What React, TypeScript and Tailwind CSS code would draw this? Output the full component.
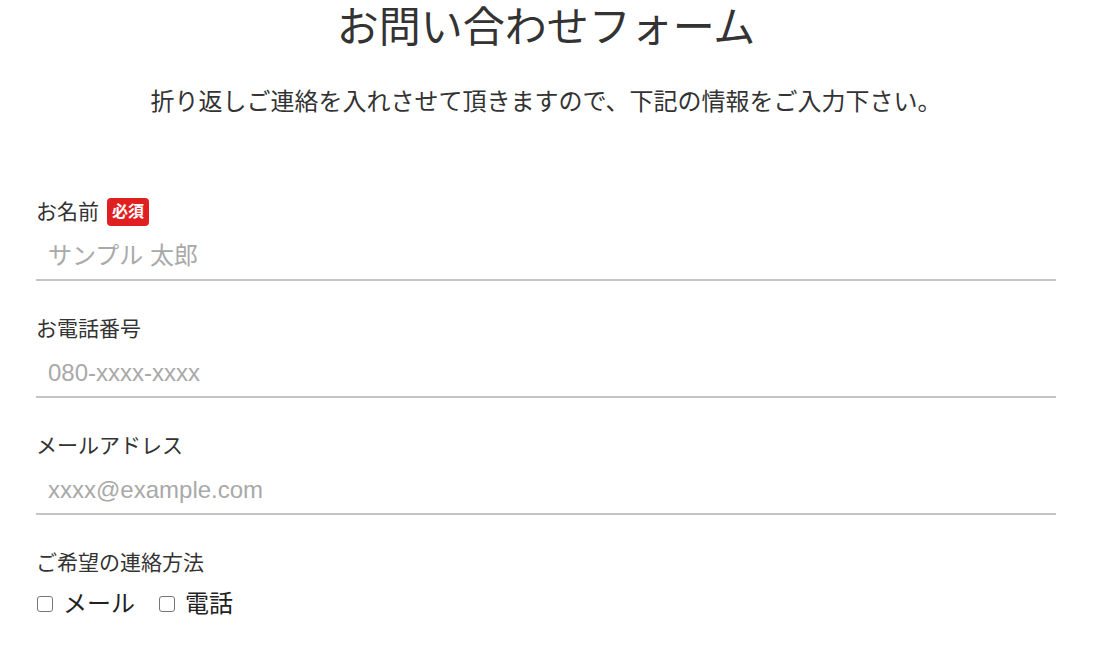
const font = "font-['Liberation_Sans','Noto_Sans_CJK_JP',sans-serif]";

function Field({
  label,
  placeholder,
  required,
  type = "text",
}: {
  label: string;
  placeholder: string;
  required?: boolean;
  type?: string;
}) {
  return (
    <div className="mb-[34px]">
      <div className="flex h-[28px] items-center gap-2">
        <span className="text-[21px] text-[#333]">{label}</span>
        {required && (
          <span className="flex h-[28px] items-center rounded-[4px] bg-[#e02020] px-[5px] text-[16px] font-bold text-white">
            必須
          </span>
        )}
      </div>
      <input
        type={type}
        placeholder={placeholder}
        className="mt-[7px] block h-[48px] w-full border-b-2 border-[#c4c4c4] px-3 text-[24px] text-[#333] outline-none placeholder:text-[#a9a9a9]"
      />
    </div>
  );
}

function Check({ label, className = "" }: { label: string; className?: string }) {
  return (
    <label className={`flex items-center ${className}`}>
      <input
        type="checkbox"
        className="h-[16px] w-[16px] appearance-none rounded-[3px] border border-[#767676] bg-white"
      />
      <span className="ml-[10px]">{label}</span>
    </label>
  );
}

export default function App() {
  return (
    <div className={`min-h-screen bg-white ${font}`}>
      <div className="ml-[36px] w-[1020px]">
        <h1 className="text-center text-[42px] leading-[56px] text-[#333]">
          お問い合わせフォーム
        </h1>
        <p className="mt-[30px] text-center text-[24px] leading-[32px] text-[#333]">
          折り返しご連絡を入れさせて頂きますので、下記の情報をご入力下さい。
        </p>

        <form className="mt-[80px]">
          <Field label="お名前" placeholder="サンプル 太郎" required />
          <Field label="お電話番号" placeholder="080-xxxx-xxxx" type="tel" />
          <Field label="メールアドレス" placeholder="xxxx@example.com" type="email" />

          <div>
            <div className="flex h-[28px] items-center">
              <span className="text-[21px] text-[#333]">ご希望の連絡方法</span>
            </div>
            <div className="mt-[13px] flex h-[28px] items-center text-[24px] text-[#222]">
              <Check label="メール" className="ml-[1px]" />
              <Check label="電話" className="ml-[24px]" />
            </div>
          </div>
        </form>
      </div>
    </div>
  );
}
